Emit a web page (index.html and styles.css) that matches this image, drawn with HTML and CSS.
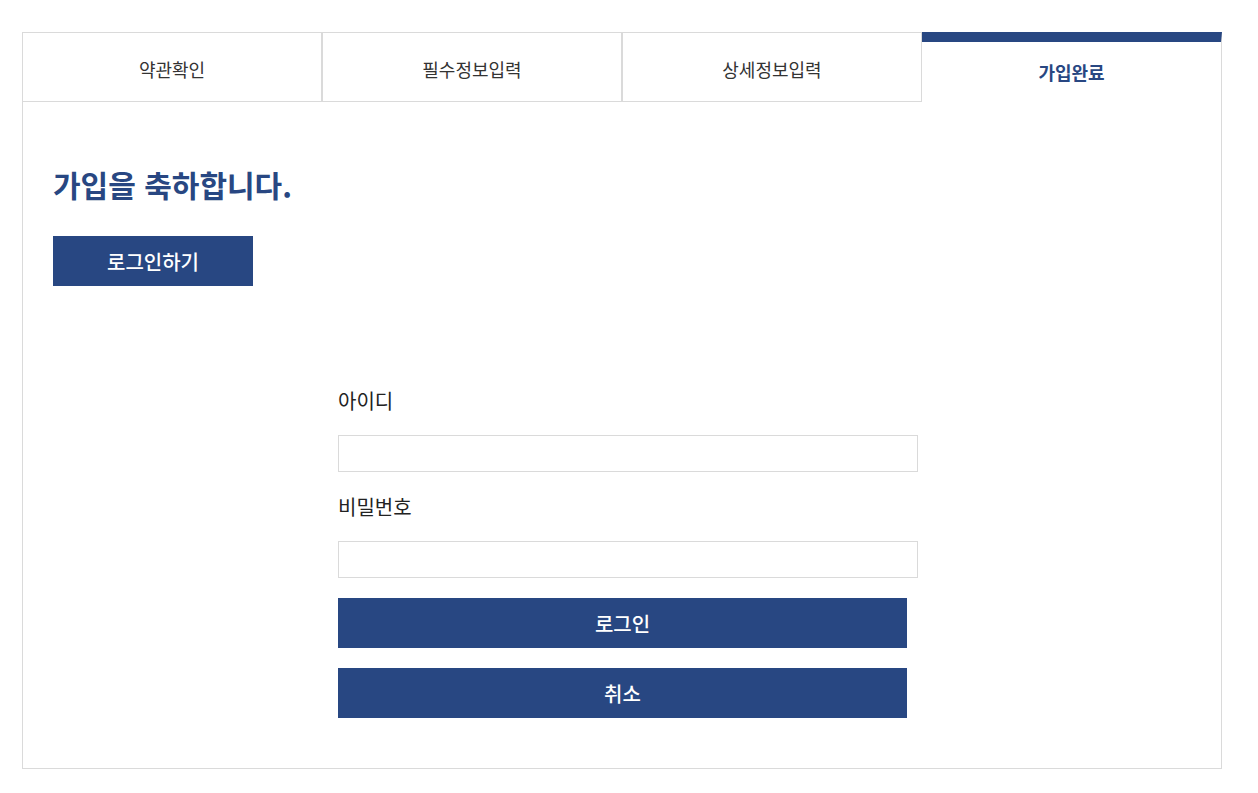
FILE: index.html
```html
<!DOCTYPE html>
<html lang="ko">
  <head>
    <meta charset="UTF-8" />
    <meta name="viewport" content="width=device-width, initial-scale=1.0" />
    <title>회원가입 - 가입완료</title>
    <link rel="stylesheet" href="styles.css">
  </head>
  <body>
    <div class="join">
      <ul class="steps">
        <li>약관확인</li>
        <li>필수정보입력</li>
        <li>상세정보입력</li>
        <li class="on">가입완료</li>
      </ul>

      <div class="join-body">
        <h2 class="join-title">가입을 축하합니다.</h2>
        <button class="btn-login-go">로그인하기</button>

        <form class="login-form" onsubmit="return false">
          <label for="userId">아이디</label>
          <input type="text" id="userId" />
          <label for="userPw">비밀번호</label>
          <input type="password" id="userPw" />
          <button type="submit" class="btn-block">로그인</button>
          <button type="button" class="btn-block">취소</button>
        </form>
      </div>
    </div>
  </body>
</html>
```

FILE: styles.css
```css
:root {
  --main-blue: #284782;
  --line-gray: #dadada;
  --text-dark: #222;
}

body {
  margin: 0;
  font-family: "Noto Sans CJK KR", "Noto Sans", sans-serif;
  color: var(--text-dark);
  background-color: white;
}

.join {
  width: 1200px;
  margin: 32px 0 0 22px;
}

.steps {
  display: flex;
  margin: 0;
  padding: 0;
  list-style: none;
}

.steps li {
  width: 300px;
  height: 70px;
  box-sizing: border-box;
  display: flex;
  align-items: center;
  justify-content: center;
  padding-top: 3px;
  border: 1px solid var(--line-gray);
  font-size: 18px;
  color: #333;
}

.steps li.on {
  padding-top: 0;
  border-top: 10px solid var(--main-blue);
  border-left: none;
  border-bottom: none;
  color: var(--main-blue);
  font-weight: 700;
}

.join-body {
  border: 1px solid var(--line-gray);
  border-top: none;
  padding: 62px 30px 50px;
}

.join-title {
  margin: 0 0 32px;
  font-size: 30px;
  line-height: 40px;
  font-weight: 700;
  color: var(--main-blue);
}

.btn-login-go {
  display: block;
  width: 200px;
  height: 50px;
  border: none;
  background-color: var(--main-blue);
  color: white;
  font-family: inherit;
  font-size: 20px;
  font-weight: 500;
  cursor: pointer;
}

.login-form {
  width: 580px;
  margin: 100px 0 0 285px;
}

.login-form label {
  display: block;
  font-size: 20px;
  line-height: 30px;
  margin-bottom: 19px;
}

.login-form input {
  display: block;
  width: 100%;
  height: 37px;
  box-sizing: border-box;
  border: 1px solid var(--line-gray);
  margin: 0 0 20px;
  padding: 0 10px;
  font-family: inherit;
}

.btn-block {
  display: block;
  width: 569px;
  height: 50px;
  margin-bottom: 20px;
  border: none;
  background-color: var(--main-blue);
  color: white;
  font-family: inherit;
  font-size: 20px;
  font-weight: 500;
  cursor: pointer;
}

.btn-block:last-child {
  margin-bottom: 0;
}
```
